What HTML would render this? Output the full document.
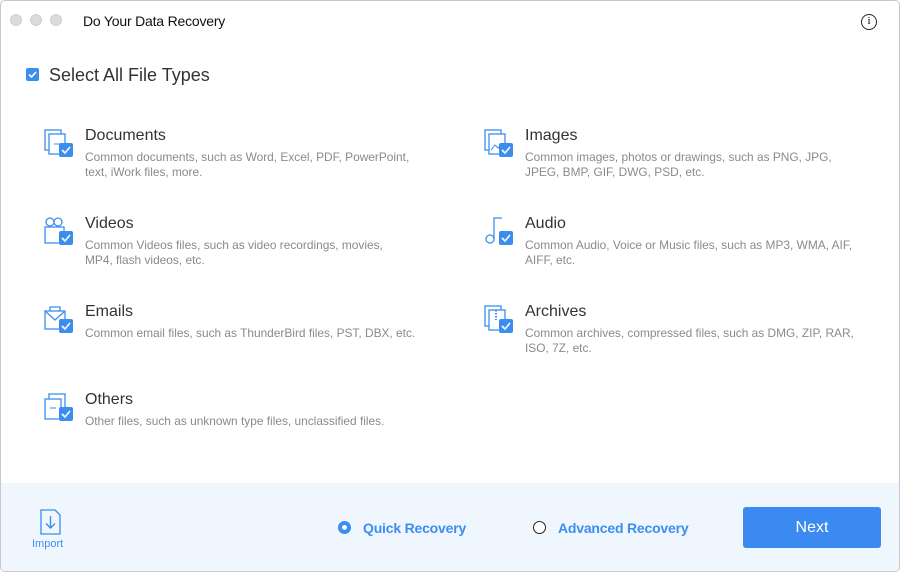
<!DOCTYPE html>
<html><head><style>
*{margin:0;padding:0;box-sizing:border-box}
body{width:900px;height:572px;overflow:hidden;font-family:"Liberation Sans",sans-serif;background:#fff}
.win{position:absolute;left:0;top:0;width:900px;height:572px;border:1px solid #c8c8c8;border-radius:5px;overflow:hidden;background:#fff}
.dot{position:absolute;top:13px;width:12px;height:12px;border-radius:50%;background:#dcdcdc;border:1px solid #d0d0d0}
.title{position:absolute;left:82px;top:12px;font-size:14px;color:#111;letter-spacing:-0.2px}
.info{position:absolute;left:860px;top:13px;width:16px;height:16px;border:1.3px solid #222;border-radius:50%;font-size:11px;text-align:center;line-height:13px;font-family:"Liberation Serif",serif}
.cb{position:absolute;width:13px;height:13px;background:#3b8ef0;border-radius:2px}
.cb svg{position:absolute;left:0;top:0}
.sel{position:absolute;left:48px;top:64px;font-size:18px;color:#333}
.item{position:absolute}
.item .ic{position:absolute;left:0;top:0;width:30px;height:32px}
.item h3{position:absolute;left:41px;top:-2px;font-weight:normal;font-size:16px;color:#333;white-space:nowrap}
.item p{position:absolute;left:41px;top:21px;font-size:11.9px;line-height:15px;color:#8a8a8a;white-space:nowrap}
.foot{position:absolute;left:0;top:482px;width:900px;height:90px;background:#f0f6fd}
.rad{position:absolute;font-size:14px;font-weight:bold;color:#3b8ef0;letter-spacing:-0.2px}
.next{position:absolute;left:742px;top:506px;width:138px;height:41px;background:#3a8af2;border-radius:3px;color:#fff;font-size:16px;text-align:center;line-height:41px}
</style></head><body><div class="win">
<div class="dot" style="left:9px"></div><div class="dot" style="left:29px"></div><div class="dot" style="left:49px"></div>
<div class="title">Do Your Data Recovery</div>
<div class="info">i</div>
<div class="cb" style="left:25px;top:67px"><svg width="13" height="13"><path d="M3 6.5l2.5 2.5 4.5-5" stroke="#fff" stroke-width="1.6" fill="none"/></svg></div>
<div class="sel">Select All File Types</div>

<div class="item" style="left:43px;top:128px"><svg class="ic" viewBox="0 0 30 32"><rect x="1" y="1" width="16" height="20" fill="none" stroke="#3b8ef0" stroke-width="1.3"/><rect x="5" y="5" width="16" height="20" fill="#fff" stroke="#3b8ef0" stroke-width="1.3"/><path d="M10 15h6" stroke="#3b8ef0"/><rect x="15" y="14" width="14" height="14" rx="2" fill="#3b8ef0"/><path d="M18 21l3 3 5-6" stroke="#fff" stroke-width="1.6" fill="none"/></svg><h3>Documents</h3><p>Common documents, such as Word, Excel, PDF, PowerPoint,<br>text, iWork files, more.</p></div>

<div class="item" style="left:483px;top:128px"><svg class="ic" viewBox="0 0 30 32"><rect x="1" y="1" width="16" height="20" fill="none" stroke="#3b8ef0" stroke-width="1.3"/><rect x="5" y="5" width="16" height="20" fill="#fff" stroke="#3b8ef0" stroke-width="1.3"/><path d="M7 21l4-5 3 3 3-3" stroke="#3b8ef0" fill="none"/><rect x="15" y="14" width="14" height="14" rx="2" fill="#3b8ef0"/><path d="M18 21l3 3 5-6" stroke="#fff" stroke-width="1.6" fill="none"/></svg><h3>Images</h3><p>Common images, photos or drawings, such as PNG, JPG,<br>JPEG, BMP, GIF, DWG, PSD, etc.</p></div>

<div class="item" style="left:43px;top:216px"><svg class="ic" viewBox="0 0 30 32"><circle cx="6" cy="5" r="4" fill="none" stroke="#3b8ef0" stroke-width="1.3"/><circle cx="14" cy="5" r="4" fill="none" stroke="#3b8ef0" stroke-width="1.3"/><rect x="1" y="10" width="19" height="16" fill="none" stroke="#3b8ef0" stroke-width="1.3"/><rect x="15" y="14" width="14" height="14" rx="2" fill="#3b8ef0"/><path d="M18 21l3 3 5-6" stroke="#fff" stroke-width="1.6" fill="none"/></svg><h3>Videos</h3><p>Common Videos files, such as video recordings, movies,<br>MP4, flash videos, etc.</p></div>

<div class="item" style="left:483px;top:216px"><svg class="ic" viewBox="0 0 30 32"><path d="M10 22V1h8" stroke="#3b8ef0" stroke-width="1.3" fill="none"/><circle cx="6" cy="22" r="4" fill="none" stroke="#3b8ef0" stroke-width="1.3"/><rect x="15" y="14" width="14" height="14" rx="2" fill="#3b8ef0"/><path d="M18 21l3 3 5-6" stroke="#fff" stroke-width="1.6" fill="none"/></svg><h3>Audio</h3><p>Common Audio, Voice or Music files, such as MP3, WMA, AIF,<br>AIFF, etc.</p></div>

<div class="item" style="left:43px;top:304px"><svg class="ic" viewBox="0 0 30 32"><rect x="1" y="6" width="20" height="18" fill="none" stroke="#3b8ef0" stroke-width="1.3"/><path d="M1 6l10 9 10-9M6 6V2h10v4" stroke="#3b8ef0" stroke-width="1.3" fill="none"/><rect x="15" y="14" width="14" height="14" rx="2" fill="#3b8ef0"/><path d="M18 21l3 3 5-6" stroke="#fff" stroke-width="1.6" fill="none"/></svg><h3>Emails</h3><p>Common email files, such as ThunderBird files, PST, DBX, etc.</p></div>

<div class="item" style="left:483px;top:304px"><svg class="ic" viewBox="0 0 30 32"><rect x="1" y="1" width="16" height="20" fill="none" stroke="#3b8ef0" stroke-width="1.3"/><rect x="5" y="5" width="16" height="20" fill="#fff" stroke="#3b8ef0" stroke-width="1.3"/><path d="M12 5v10" stroke="#3b8ef0" stroke-width="2" stroke-dasharray="1.5 1.5"/><rect x="15" y="14" width="14" height="14" rx="2" fill="#3b8ef0"/><path d="M18 21l3 3 5-6" stroke="#fff" stroke-width="1.6" fill="none"/></svg><h3>Archives</h3><p>Common archives, compressed files, such as DMG, ZIP, RAR,<br>ISO, 7Z, etc.</p></div>

<div class="item" style="left:43px;top:392px"><svg class="ic" viewBox="0 0 30 32"><rect x="5" y="1" width="16" height="20" fill="none" stroke="#3b8ef0" stroke-width="1.3"/><rect x="1" y="6" width="16" height="20" fill="#fff" stroke="#3b8ef0" stroke-width="1.3"/><path d="M6 15h6" stroke="#3b8ef0"/><rect x="15" y="14" width="14" height="14" rx="2" fill="#3b8ef0"/><path d="M18 21l3 3 5-6" stroke="#fff" stroke-width="1.6" fill="none"/></svg><h3>Others</h3><p>Other files, such as unknown type files, unclassified files.</p></div>

<div class="foot"></div>
<svg style="position:absolute;left:39px;top:508px" width="22" height="26"><path d="M1 1h14l5 5v19H1z" fill="none" stroke="#3b8ef0" stroke-width="1.3"/><path d="M10.5 7v12M6 14.5l4.5 4.5 4.5-4.5" fill="none" stroke="#3b8ef0" stroke-width="1.4"/></svg>
<div style="position:absolute;left:31px;top:537px;font-size:11px;color:#3b8ef0">Import</div>
<div style="position:absolute;left:337px;top:520px;width:13px;height:13px;border-radius:50%;border:4px solid #3b8ef0;background:#fff"></div>
<div class="rad" style="left:362px;top:519px">Quick Recovery</div>
<div style="position:absolute;left:532px;top:520px;width:13px;height:13px;border-radius:50%;border:1.3px solid #222;background:#fff"></div>
<div class="rad" style="left:557px;top:519px">Advanced Recovery</div>
<div class="next">Next</div>
</div></body></html>
